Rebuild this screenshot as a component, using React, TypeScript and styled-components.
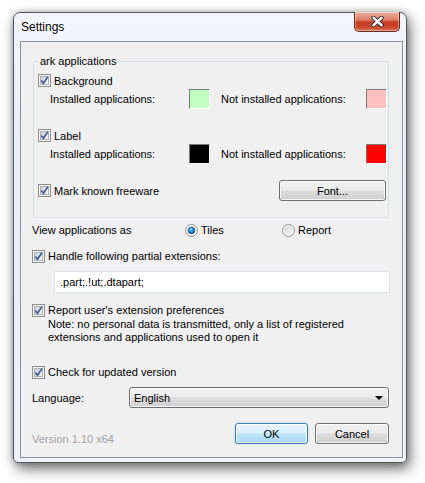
import React, { useId } from 'react';
import styled, { createGlobalStyle } from 'styled-components';

const GlobalStyle = createGlobalStyle`
  html, body {
    margin: 0;
    background: #ffffff;
  }
  body {
    font-family: 'Liberation Sans', Arial, sans-serif;
    font-size: 11px;
    color: #000;
  }
  * {
    box-sizing: border-box;
  }
`;

const CheckBox: React.FC = () => {
  const id = useId();
  return (
    <svg width="13" height="13" viewBox="0 0 13 13" style={{ flex: 'none', display: 'block' }}>
      <defs>
        <linearGradient id={id} x1="0" y1="0" x2="1" y2="1">
          <stop offset="0" stopColor="#cbced3" />
          <stop offset="1" stopColor="#f7f7f7" />
        </linearGradient>
      </defs>
      <rect x="0.5" y="0.5" width="12" height="12" fill="#f4f4f4" stroke="#8e8f8f" />
      <rect x="2.5" y="2.5" width="8" height="8" fill={`url(#${id})`} stroke="#aeb3b9" />
      <path d="M3.3 6.4 L5.5 9.3 L9.9 2.6" fill="none" stroke="#3f5d96" strokeWidth="1.7" />
    </svg>
  );
};

const Radio: React.FC<{ checked?: boolean }> = ({ checked }) => {
  const id = useId();
  return (
    <svg width="13" height="13" viewBox="0 0 13 13" style={{ flex: 'none', display: 'block' }}>
      <defs>
        <linearGradient id={`${id}a`} x1="0" y1="0" x2="1" y2="1">
          <stop offset="0" stopColor="#cfd1d4" />
          <stop offset="1" stopColor="#fbfbfb" />
        </linearGradient>
        <radialGradient id={`${id}b`} cx="0.4" cy="0.35" r="0.7">
          <stop offset="0" stopColor="#8ad9ff" />
          <stop offset="0.5" stopColor="#1f8fd6" />
          <stop offset="1" stopColor="#0c4a90" />
        </radialGradient>
      </defs>
      <circle cx="6.5" cy="6.5" r="6" fill="#f4f4f4" stroke="#8e8f8f" />
      <circle cx="6.5" cy="6.5" r="4.3" fill={`url(#${id}a)`} />
      {checked && <circle cx="6.5" cy="6.5" r="3.3" fill={`url(#${id}b)`} stroke="#1d4f86" strokeWidth="0.8" />}
    </svg>
  );
};

const CloseGlyph: React.FC = () => (
  <svg width="13" height="11" viewBox="0 0 13 11">
    <path d="M2.5 1.8 L10.5 9.2 M10.5 1.8 L2.5 9.2" stroke="#3a3a3a" strokeWidth="4.4" strokeLinecap="round" />
    <path d="M2.5 1.8 L10.5 9.2 M10.5 1.8 L2.5 9.2" stroke="#ffffff" strokeWidth="2.4" strokeLinecap="round" />
  </svg>
);

export default function App() {
  return (
    <>
      <GlobalStyle />
      <Desktop>
        <Window>
          <TitleBar>
            <Title>Settings</Title>
            <CloseButton>
              <CloseGlyph />
            </CloseButton>
          </TitleBar>

          <Client>
            <Group>
              <Legend>ark applications</Legend>

              <CheckRow>
                <CheckBox />
                <span>Background</span>
              </CheckRow>
              <ColorRow>
                <span>Installed applications:</span>
                <Swatch color="#c0ffc0" />
                <Indented>Not installed applications:</Indented>
                <Swatch color="#ffc0c0" />
              </ColorRow>

              <CheckRow top={18}>
                <CheckBox />
                <span>Label</span>
              </CheckRow>
              <ColorRow>
                <span>Installed applications:</span>
                <Swatch color="#000000" />
                <Indented>Not installed applications:</Indented>
                <Swatch color="#ff0000" />
              </ColorRow>

              <SplitRow>
                <CheckRow>
                  <CheckBox />
                  <span>Mark known freeware</span>
                </CheckRow>
                <FontButton>Font...</FontButton>
              </SplitRow>
            </Group>

            <ViewRow>
              <span>View applications as</span>
              <RadioLabel>
                <Radio checked />
                <span>Tiles</span>
              </RadioLabel>
              <RadioLabel>
                <Radio />
                <span>Report</span>
              </RadioLabel>
            </ViewRow>

            <CheckRow top={10} height={16}>
              <CheckBox />
              <span>Handle following partial extensions:</span>
            </CheckRow>
            <TextInput defaultValue=".part;.!ut;.dtapart;" />

            <CheckRow top={9} height={16}>
              <CheckBox />
              <span>Report user's extension preferences</span>
            </CheckRow>
            <Note>
              Note: no personal data is transmitted, only a list of registered
              <br />
              extensions and applications used to open it
            </Note>

            <CheckRow top={20} height={16}>
              <CheckBox />
              <span>Check for updated version</span>
            </CheckRow>

            <LanguageRow>
              <span>Language:</span>
              <Select>
                <span>English</span>
                <Arrow />
              </Select>
            </LanguageRow>

            <Footer>
              <Version>Version 1.10 x64</Version>
              <Buttons>
                <PushButton primary>OK</PushButton>
                <PushButton>Cancel</PushButton>
              </Buttons>
            </Footer>
          </Client>
        </Window>
      </Desktop>
    </>
  );
}

const Desktop = styled.div`
  height: 483px;
  padding: 12px 0 0 13px;
  overflow: hidden;
`;

const Window = styled.div`
  width: 394px;
  border: 1px solid #52565c;
  border-radius: 7px 7px 5px 5px;
  background: linear-gradient(180deg, #f3f6fa 0%, #eaeff5 30%, #eef2f7 100%);
  box-shadow: 3px 6px 14px rgba(0, 0, 0, 0.55), 0 0 6px rgba(0, 0, 0, 0.25);
`;

const TitleBar = styled.div`
  height: 28px;
  display: flex;
  justify-content: space-between;
  align-items: flex-start;
  padding: 0 6px 0 7px;
`;

const Title = styled.div`
  font-size: 12px;
  line-height: 28px;
  text-shadow: 0 0 6px #ffffff, 0 0 3px #ffffff;
`;

const CloseButton = styled.div`
  width: 46px;
  height: 20px;
  margin-top: -1px;
  display: flex;
  align-items: center;
  justify-content: center;
  border: 1px solid #6e2b20;
  border-top: none;
  border-radius: 0 0 5px 5px;
  background: linear-gradient(180deg, #eab2a4 0%, #dc7f69 40%, #c63d22 55%, #c8452b 80%, #dd7a5c 100%);
  box-shadow: inset 0 0 0 1px rgba(255, 255, 255, 0.35);
`;

const Client = styled.div`
  margin: 0 3px 4px 6px;
  border: 1px solid #89929c;
  background: #f0f0f0;
  padding: 12px 12px 13px 11px;
`;

const Group = styled.fieldset`
  margin: 0 1px 0 1px;
  min-width: 0;
  border: 1px solid #d5dfe5;
  border-radius: 3px;
  padding: 4px 1px 16px 4px;
`;

const Legend = styled.legend`
  padding: 0 2px;
  line-height: 14px;
`;

const CheckRow = styled.div<{ top?: number; height?: number }>`
  display: flex;
  align-items: center;
  gap: 3px;
  height: ${p => p.height ?? 17}px;
  margin-top: ${p => p.top ?? 0}px;
  white-space: nowrap;
`;

const ColorRow = styled.div`
  display: grid;
  grid-template-columns: 139px 21px 156px 21px;
  align-items: center;
  height: 20px;
  margin-left: 12px;
  white-space: nowrap;
`;

const Indented = styled.span`
  padding-left: 11px;
`;

const Swatch = styled.div<{ color: string }>`
  width: 21px;
  height: 20px;
  background: ${p => p.color};
  border: 1px solid;
  border-color: #7a7a7a #ffffff #ffffff #7a7a7a;
`;

const SplitRow = styled.div`
  display: flex;
  align-items: center;
  justify-content: space-between;
  margin-top: 16px;
  height: 21px;
  padding-right: 1px;
`;

const buttonFace = `
  border: 1px solid #707070;
  border-radius: 3px;
  background: linear-gradient(180deg, #f2f2f2 0%, #ebebeb 48%, #dddddd 52%, #cfcfcf 100%);
  box-shadow: inset 0 0 0 1px rgba(255, 255, 255, 0.75);
`;

const FontButton = styled.div`
  ${buttonFace}
  width: 107px;
  height: 21px;
  display: flex;
  align-items: center;
  justify-content: center;
`;

const ViewRow = styled.div`
  display: grid;
  grid-template-columns: 153px 97px auto;
  align-items: center;
  height: 16px;
  margin-top: 4px;
`;

const RadioLabel = styled.div`
  display: flex;
  align-items: center;
  gap: 3px;
`;

const TextInput = styled.input`
  display: block;
  width: calc(100% - 22px);
  height: 22px;
  margin: 7px 0 0 22px;
  padding: 0 0 0 5px;
  border: 1px solid #e0e5ea;
  background: #ffffff;
  font: inherit;
  color: #000;
  outline: none;
`;

const Note = styled.div`
  margin-left: 16px;
  line-height: 13px;
`;

const LanguageRow = styled.div`
  display: grid;
  grid-template-columns: 97px 1fr;
  align-items: center;
  height: 21px;
  margin-top: 7px;
`;

const Select = styled.div`
  ${buttonFace}
  height: 21px;
  margin-right: 1px;
  display: flex;
  align-items: center;
  justify-content: space-between;
  padding: 0 5px 0 4px;
`;

const Arrow = styled.span`
  width: 0;
  height: 0;
  border-left: 4px solid transparent;
  border-right: 4px solid transparent;
  border-top: 4px solid #000;
`;

const Footer = styled.div`
  display: flex;
  align-items: flex-start;
  margin-top: 15px;
  height: 21px;
`;

const Version = styled.div`
  margin-top: 8px;
  line-height: 16px;
  color: #a3a3a3;
`;

const Buttons = styled.div`
  display: flex;
  gap: 7px;
  margin-left: auto;
  margin-right: 1px;
`;

const PushButton = styled.div<{ primary?: boolean }>`
  ${buttonFace}
  width: ${p => (p.primary ? 73 : 74)}px;
  height: 21px;
  display: flex;
  align-items: center;
  justify-content: center;
  ${p =>
    p.primary &&
    `
    border-color: #3c7fb1;
    background: linear-gradient(180deg, #eaf6fd 0%, #d9f0fc 48%, #bee6fd 52%, #a7d9f5 100%);
    box-shadow: inset 0 0 0 1px rgba(255, 255, 255, 0.8), 0 0 2px rgba(60, 127, 177, 0.4);
  `}
`;
